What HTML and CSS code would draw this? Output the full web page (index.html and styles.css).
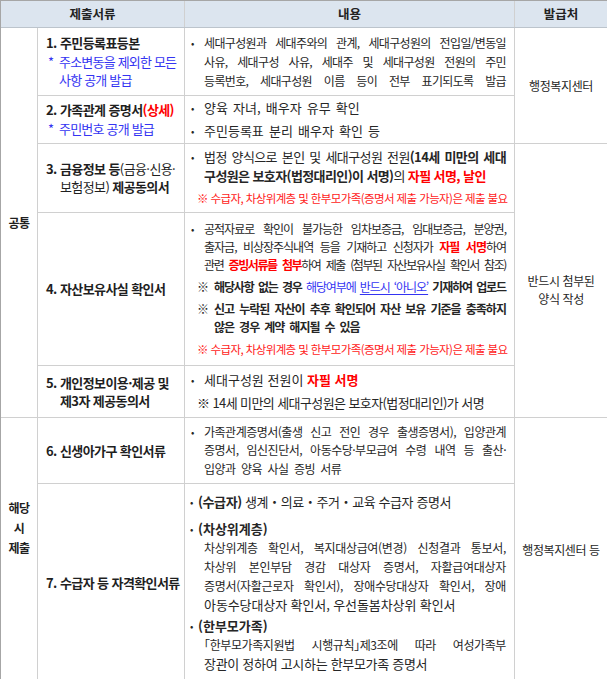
FILE: index.html
```html
<!DOCTYPE html>
<html lang="ko">
<head>
<meta charset="utf-8">
<title>제출서류</title>
<link rel="stylesheet" href="styles.css">
</head>
<body>
<table class="docs">
  <colgroup>
    <col class="c-cat"><col class="c-name"><col class="c-desc"><col class="c-issuer">
  </colgroup>
  <thead>
    <tr class="head">
      <th colspan="2">제출서류</th>
      <th>내용</th>
      <th>발급처</th>
    </tr>
  </thead>
  <tbody>
    <tr class="r1">
      <td class="cat" rowspan="5"><div class="cat-label">공통</div></td>
      <td class="name">
        <div class="title"><span>1.</span><span>주민등록표등본</span></div>
        <div class="note"><span>*</span><span>주소변동을 제외한 모든<br>사항 공개 발급</span></div>
      </td>
      <td class="desc lh19">
        <div class="item ls65"><span class="dot">•</span><p><span class="ln">세대구성원과 세대주와의 관계, 세대구성원의 전입일/변동일</span><span class="ln">사유, 세대구성 사유, 세대주 및 세대구성원 전원의 주민</span><span class="ln">등록번호, 세대구성원 이름 등이 전부 표기되도록 발급</span></p></div>
      </td>
      <td class="issuer" rowspan="2">행정복지센터</td>
    </tr>
    <tr class="r2">
      <td class="name">
        <div class="title"><span>2.</span><span>가족관계 증명서<span class="red">(상세)</span></span></div>
        <div class="note"><span>*</span><span>주민번호 공개 발급</span></div>
      </td>
      <td class="desc">
        <div class="item big ws"><span class="dot">•</span><p>양육 자녀, 배우자 유무 확인</p></div>
        <div class="item big ws"><span class="dot">•</span><p>주민등록표 분리 배우자 확인 등</p></div>
      </td>
    </tr>
    <tr class="r3">
      <td class="name">
        <div class="title"><span>3.</span><span>금융정보 등<span class="n">(금융·신용·</span><br><span class="n">보험정보)</span> 제공동의서</span></div>
      </td>
      <td class="desc">
        <div class="item big ls60"><span class="dot">•</span><p><span class="ln">법정 양식으로 본인 및 세대구성원 전원<b>(14세 미만의 세대</b></span><span class="lx"><b>구성원은 보호자(법정대리인)이 서명)</b>의 <b class="red">자필 서명, 날인</b></span></p></div>
        <div class="ref red-note">※ 수급자, 차상위계층 및 한부모가족(증명서 제출 가능자)은 제출 불요</div>
      </td>
      <td class="issuer shifted" rowspan="3">반드시 첨부된 양식 작성</td>
    </tr>
    <tr class="r4">
      <td class="name">
        <div class="title"><span>4.</span><span>자산보유사실 확인서</span></div>
      </td>
      <td class="desc lh18">
        <div class="item ls100"><span class="dot">•</span><p><span class="ln">공적자료로 확인이 불가능한 임차보증금, 임대보증금, 분양권,</span><span class="ln">출자금, 비상장주식내역 등을 기재하고 신청자가 <b class="red">자필 서명</b>하여</span><span class="ln ls140">관련 <b class="red">증빙서류를 첨부</b>하여 제출 (첨부된 자산보유사실 확인서 참조)</span></p></div>
        <div class="ref ln ls110"><b>※ 해당사항 없는 경우</b> <span class="blue">해당여부에 <u>반드시 ‘아니오’</u></span> <b>기재하여 업로드</b></div>
        <div class="ref hang ls95"><b>※</b><p><b class="ln">신고 누락된 자산이 추후 확인되어 자산 보유 기준을 충족하지</b><b class="lx ws-wide">않은 경우 계약 해지될 수 있음</b></p></div>
        <div class="ref red-note">※ 수급자, 차상위계층 및 한부모가족(증명서 제출 가능자)은 제출 불요</div>
      </td>
    </tr>
    <tr class="r5">
      <td class="name">
        <div class="title"><span>5.</span><span>개인정보이용·제공 및<br>제3자 제공동의서</span></div>
      </td>
      <td class="desc">
        <div class="item big"><span class="dot">•</span><p>세대구성원 전원이 <b class="red">자필 서명</b></p></div>
        <div class="ref big ls60">※ 14세 미만의 세대구성원은 보호자(법정대리인)가 서명</div>
      </td>
    </tr>
    <tr class="r6">
      <td class="cat cat-b" rowspan="2"><div class="cat-label">해당<br>시<br>제출</div></td>
      <td class="name">
        <div class="title"><span>6.</span><span>신생아가구 확인서류</span></div>
      </td>
      <td class="desc">
        <div class="item ls50"><span class="dot">•</span><p><span class="ln">가족관계증명서(출생 신고 전인 경우 출생증명서), 입양관계</span><span class="ln">증명서, 임신진단서, 아동수당·부모급여 수령 내역 등 출산·</span><span class="lx ws-wide">입양과 양육 사실 증빙 서류</span></p></div>
      </td>
      <td class="issuer" rowspan="2">행정복지센터 등</td>
    </tr>
    <tr class="r7">
      <td class="name">
        <div class="title"><span>7.</span><span>수급자 등 자격확인서류</span></div>
      </td>
      <td class="desc lh19">
        <div class="sub big ls40"><span class="dot">•</span><p><b>(수급자)</b> 생계・의료・주거・교육 수급자 증명서</p></div>
        <div class="sub big gap"><span class="dot">•</span><p><b>(차상위계층)</b></p></div>
        <p class="indent ls30"><span class="ln">차상위계층 확인서, 복지대상급여(변경) 신청결과 통보서,</span><span class="ln">차상위 본인부담 경감 대상자 증명서, 자활급여대상자</span><span class="ln">증명서(자활근로자 확인서), 장애수당대상자 확인서, 장애</span><span class="lx big ls10">아동수당대상자 확인서, 우선돌봄차상위 확인서</span></p>
        <div class="sub big gap-s"><span class="dot">•</span><p><b>(한부모가족)</b></p></div>
        <p class="indent ls40"><span class="spread"><span><span class="half">「</span>한부모가족지원법</span><span>시행규칙<span class="half">」</span>제3조에</span><span>따라</span><span>여성가족부</span></span><span class="lx big ls30">장관이 정하여 고시하는 한부모가족 증명서</span></p>
      </td>
    </tr>
  </tbody>
</table>
</body>
</html>
```

FILE: styles.css
```css
html, body {
  margin: 0;
  padding: 0;
  background: #ffffff;
}

body {
  font-family: "Noto Sans CJK KR", "Noto Sans", sans-serif;
  font-size: 12px;
  line-height: 18.5px;
  color: #262626;
}

p {
  margin: 0;
}

.docs {
  width: 607px;
  table-layout: fixed;
  border-collapse: collapse;
  outline: 1px solid #a6a6a6;
  outline-offset: -1px;
}

.c-cat { width: 37px; }
.c-name { width: 147px; }
.c-desc { width: 330px; }
.c-issuer { width: 93px; }

.docs th,
.docs td {
  border: 1px solid #d0d0d0;
  vertical-align: middle;
  padding: 0;
}

.head { height: 27px; }
.r1 { height: 68px; }
.r2 { height: 45px; }
.r3 { height: 69px; }
.r4 { height: 153px; }
.r5 { height: 52px; }
.r6 { height: 66px; }
.r7 { height: 198px; }

.docs th {
  background: #dce5ef;
  font-weight: 700;
  font-size: 12.5px;
  color: #222222;
  text-align: center;
  border-bottom-color: #bcc4cc;
}

.cat {
  text-align: center;
  font-weight: 700;
  letter-spacing: -0.5px;
  color: #1f1f1f;
}

.cat-b {
  padding-bottom: 44px !important;
}

.cat-label {
  line-height: 20px;
}

.name {
  padding: 3px 4px 3px 8px !important;
}

.title {
  display: grid;
  grid-template-columns: 14px auto;
  font-size: 13px;
  font-weight: 700;
  white-space: nowrap;
  letter-spacing: -0.6px;
  line-height: 18px;
  color: #1f1f1f;
}

.title .n {
  font-weight: 400;
}

.note {
  display: grid;
  grid-template-columns: 11px auto;
  padding-left: 2px;
  margin-top: 1px;
  font-size: 13px;
  color: #3434f2;
  letter-spacing: -0.8px;
  white-space: nowrap;
}

.desc {
  padding: 3px 8px 3px 5px !important;
}

.lh19 { line-height: 19px; }
.lh18 { line-height: 18px; }

.big {
  font-size: 13px;
}

.ws {
  word-spacing: 1.5px;
}

.ws-wide {
  word-spacing: 2.5px;
}

.item {
  display: grid;
  grid-template-columns: 14px 1fr;
}

.item + .item,
.item + .ref,
.ref + .ref {
  margin-top: 4px;
}

.dot {
  font-size: 10px;
  padding-left: 1px;
}

.ln,
.lx {
  display: block;
  white-space: nowrap;
}

.ln {
  text-align: justify;
  text-align-last: justify;
}

.spread {
  display: flex;
  justify-content: space-between;
  white-space: nowrap;
}

.half {
  font-feature-settings: "halt";
}

.ref {
  margin-left: 7px;
}

.hang {
  display: grid;
  grid-template-columns: 17px 1fr;
}

.red-note {
  color: #ff1a1a;
  font-size: 11.5px;
  letter-spacing: -0.6px;
  white-space: nowrap;
}

.red {
  color: #ff0000;
}

.blue {
  color: #3434f2;
}

.blue u {
  text-decoration-thickness: 1px;
  text-underline-offset: 2px;
}

b {
  font-weight: 700;
}

.sub {
  display: grid;
  grid-template-columns: 8px 1fr;
}

.sub .dot {
  padding-left: 0;
}

.sub.gap {
  margin-top: 8px;
}

.sub.gap-s {
  margin-top: 2px;
}

.indent {
  margin-left: 14px;
}

.issuer {
  text-align: center;
  letter-spacing: -0.4px;
  padding: 2px 3px !important;
  line-height: 18px;
  word-break: keep-all;
}

.issuer.shifted {
  padding-top: 20px !important;
}

.ls10 { letter-spacing: -0.1px; }
.ls20 { letter-spacing: -0.2px; }
.ls30 { letter-spacing: -0.3px; }
.ls40 { letter-spacing: -0.4px; }
.ls50 { letter-spacing: -0.5px; }
.ls60 { letter-spacing: -0.6px; }
.ls65 { letter-spacing: -0.65px; }
.ls95 { letter-spacing: -0.95px; }
.ls100 { letter-spacing: -1px; }
.ls110 { letter-spacing: -1.1px; }
.ls140 { letter-spacing: -1.4px; }
```
